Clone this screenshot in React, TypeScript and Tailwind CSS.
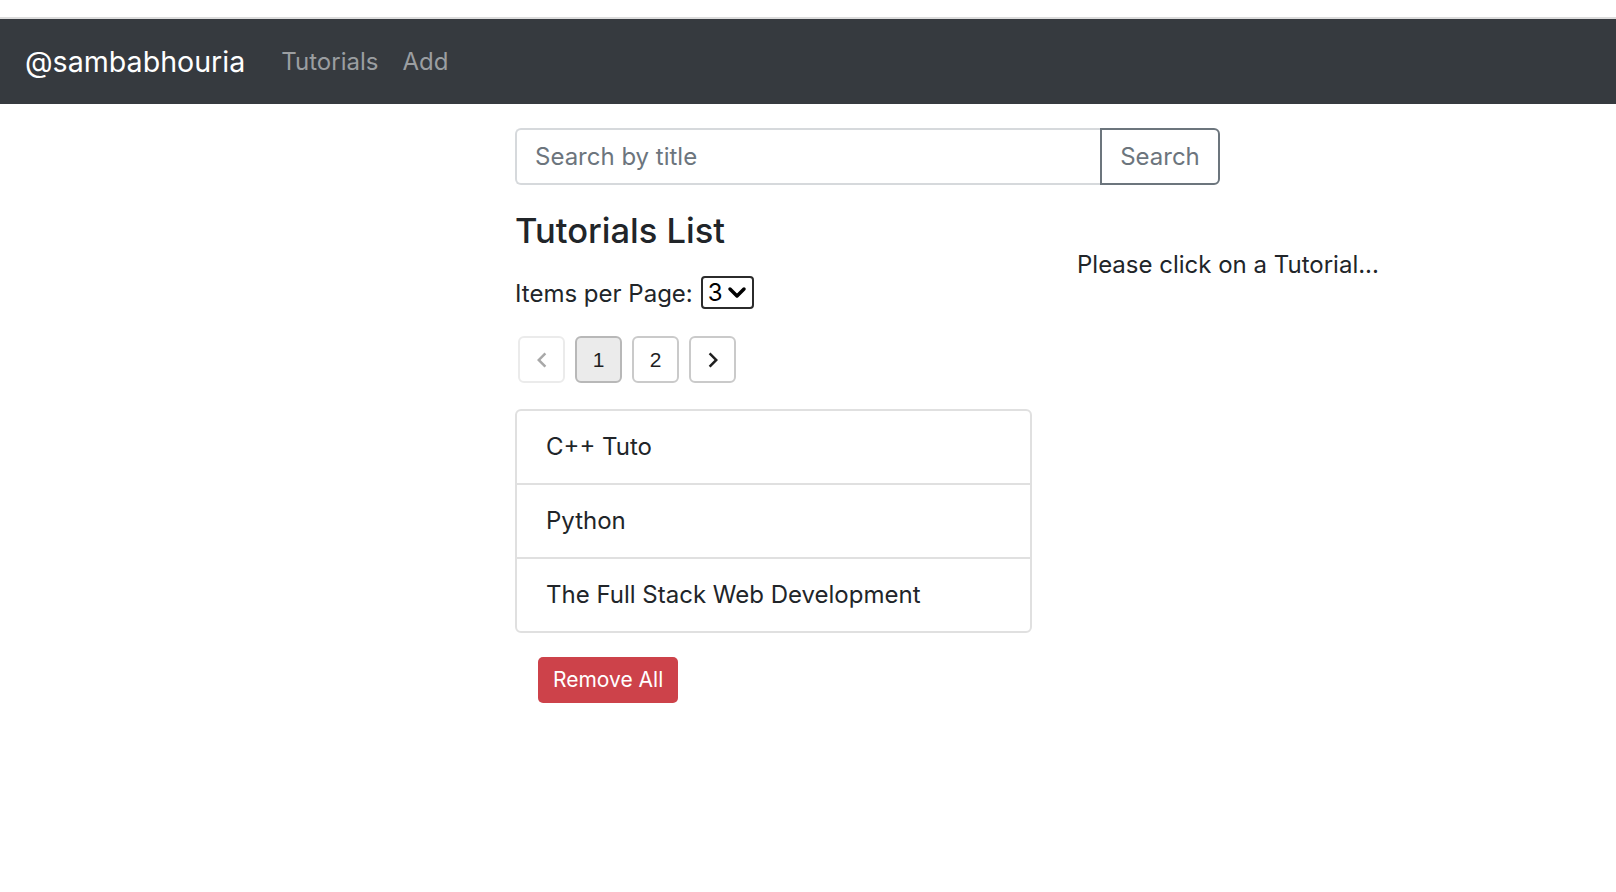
export default function App() {
  const tutorials = ["C++ Tuto", "Python", "The Full Stack Web Development"];

  return (
    <div className="min-h-screen bg-white text-[#212529] font-['Inter','Noto_Sans',sans-serif]">
      <div className="h-[17px]" />
      <div className="h-[2px] bg-[#dcdcdc]" />

      <nav className="flex h-[85px] items-center bg-[#363a3f] px-[25px]">
        <span className="mr-[24px] mt-[2px] text-[28.6px] leading-none text-white">@sambabhouria</span>
        <span className="px-[12px] text-[24px] text-[#9b9ea1]">Tutorials</span>
        <span className="px-[12px] text-[24px] text-[#9b9ea1]">Add</span>
      </nav>

      <main className="pl-[515px] pt-[24px]">
        {/* search */}
        <div className="flex h-[57px] w-[705px]">
          <input
            placeholder="Search by title"
            className="min-w-0 flex-1 rounded-l-[6px] border-2 border-r-0 border-[#d6d9dc] px-[18px] text-[24px] outline-none placeholder:text-[#6c757d]"
          />
          <button className="w-[120px] rounded-r-[6px] border-2 border-[#6c757d] text-[24px] text-[#6c757d]">
            Search
          </button>
        </div>

        <div className="mt-[24px] flex">
          <div className="w-[517px]">
            <h4 className="text-[34.5px] font-medium leading-[43px]">Tutorials List</h4>

            <div className="mt-[24px] flex h-[33px] items-center text-[24px]">
              <span className="mt-[3px]">Items per Page:</span>
              <div className="ml-[8px] flex h-[33px] items-center gap-[4px] rounded-[4px] border-2 border-[#2b2b2b] pl-[5px] pr-[5px]">
                <span className="text-[24px] leading-none text-black">3</span>
                <svg width="20" height="14" viewBox="0 0 20 14">
                  <polyline points="3,3 10,10 17,3" fill="none" stroke="#000" strokeWidth="3.5" strokeLinecap="round" strokeLinejoin="round" />
                </svg>
              </div>
            </div>

            {/* pagination */}
            <div className="mt-[27px] flex gap-[10px] pl-[3px] font-['Liberation_Sans',Arial,sans-serif] text-[21px]">
              <div className="flex h-[47px] w-[47px] items-center justify-center rounded-[6px] border-2 border-[#ebebeb]">
                <svg width="30" height="30" viewBox="0 0 24 24" fill="#a8a8a8">
                  <path d="M15.41 7.41 14 6l-6 6 6 6 1.41-1.41L10.83 12z" />
                </svg>
              </div>
              <div className="flex h-[47px] w-[47px] items-center justify-center rounded-[6px] border-2 border-[#b8b8b8] bg-[#ebebeb] text-[#1f1f1f]">
                1
              </div>
              <div className="flex h-[47px] w-[47px] items-center justify-center rounded-[6px] border-2 border-[#cacaca] text-[#1f1f1f]">
                2
              </div>
              <div className="flex h-[47px] w-[47px] items-center justify-center rounded-[6px] border-2 border-[#cacaca]">
                <svg width="30" height="30" viewBox="0 0 24 24" fill="#1f1f1f">
                  <path d="M10 6 8.59 7.41 13.17 12l-4.58 4.59L10 18l6-6z" />
                </svg>
              </div>
            </div>

            {/* list */}
            <ul className="mt-[26px] overflow-hidden rounded-[6px] border-2 border-[#e0e0e0]">
              {tutorials.map((t, i) => (
                <li
                  key={t}
                  className={
                    "px-[29px] py-[18px] text-[24px] leading-[36px] " +
                    (i > 0 ? "border-t-2 border-[#e0e0e0]" : "")
                  }
                >
                  {t}
                </li>
              ))}
            </ul>

            <button className="ml-[23px] mt-[24px] h-[46px] rounded-[5px] bg-[#cd424a] px-[15px] text-[21px] text-white">
              Remove All
            </button>
          </div>

          <div className="ml-[45px]">
            <p className="mt-[38px] text-[24px] leading-[36px]">Please click on a Tutorial...</p>
          </div>
        </div>
      </main>
    </div>
  );
}
